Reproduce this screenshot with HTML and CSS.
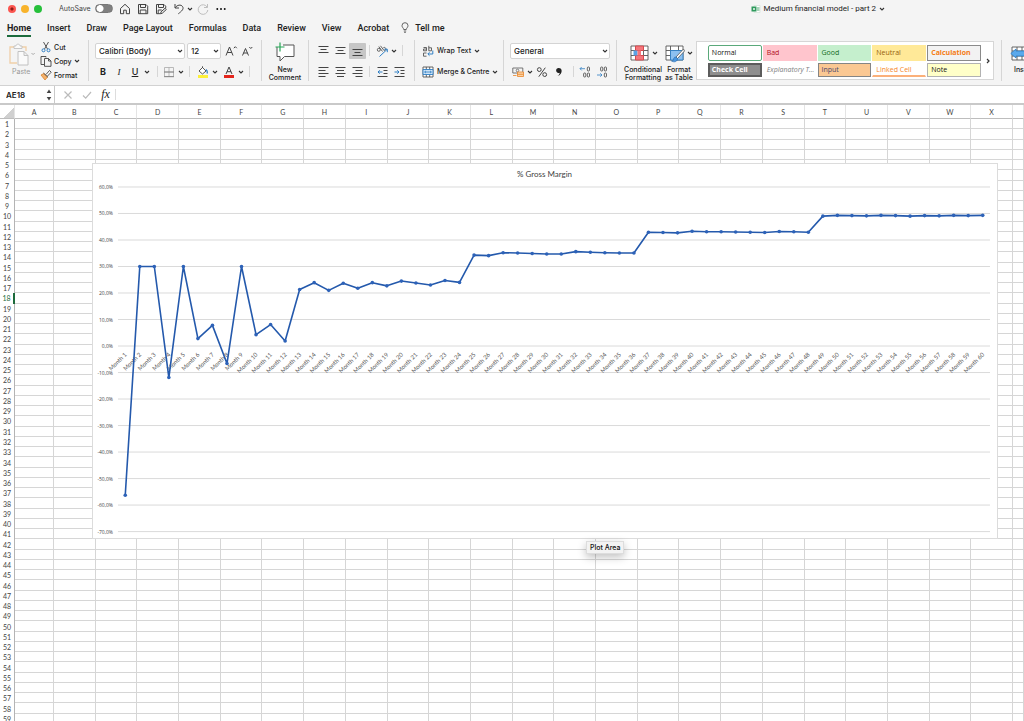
FILE: index.html
```
<!DOCTYPE html>
<html lang="en">

<head>
    <meta charset="UTF-8">
    <meta name="viewport" content="width=device-width, initial-scale=1.0">
    <title>Medium financial model - part 2</title>
    <link rel="stylesheet" href="styles.css">
</head>

<body>
<svg class="defs" aria-hidden="true">
    <symbol id="chev" viewBox="0 0 6 6"><path d="M1 2l2 2 2-2" fill="none" stroke="currentColor" stroke-width="1.1"/></symbol>
    <symbol id="table-grid" viewBox="0 0 20 18"><path d="M1 1h17v14H1zM1 5.5h17M1 10.5h17M5.5 1v14M13.500 1v14" fill="#fff" stroke="#555" stroke-width=".9"/></symbol>
</svg>

<!-- Title bar -->
<header class="titlebar">
    <div class="lights">
        <span class="light red"></span>
        <span class="light yellow"></span>
        <span class="light green"></span>
    </div>
    <label class="autosave" for="autosave">AutoSave</label>
    <input type="checkbox" id="autosave" class="toggle">
    <div class="quick">
        <button aria-label="Home"><svg width="12" height="12" viewBox="0 0 12 12"><path d="M1.500 5.500L6 1.300l4.500 4.200v5.200H7.300V7.200H4.700v3.500H1.500z"/></svg></button>
        <button aria-label="Save"><svg width="12" height="12" viewBox="0 0 12 12"><path d="M1.500 1.500h7.500l1.700 1.700v7.500H1.500zM3.500 1.500v3h5v-3M3.200 10.700V7h5.800v3.700"/></svg></button>
        <button aria-label="Save as"><svg width="12" height="12" viewBox="0 0 12 12"><path d="M5 10.700H1.500V1.500h7.500l1.700 1.700v2M3.500 1.500v3h5v-3M3.200 10.700V7h3.500"/><path d="M5.500 10.800l.6-2 4-3.600 1.200 1.300-4 3.700z" fill="#444"/></svg></button>
        <button class="undo" aria-label="Undo"><svg width="12" height="12" viewBox="0 0 12 12"><path d="M2 1v4h4M2.200 4.800C4 1.800 8 1.200 9.600 3.600c1.500 2.500-.8 4.400-4.300 7.200"/></svg></button>
        <button class="undo-more" aria-label="Undo history"><svg class="chev"><use href="#chev"/></svg></button>
        <button class="faded" aria-label="Redo"><svg width="12" height="12" viewBox="0 0 12 12"><path d="M10.500 1v3.500H7M10.200 4.200A4.800 4.800 0 1 0 10.800 7"/></svg></button>
        <button class="dots" aria-label="More"><svg width="12" height="12" viewBox="0 0 12 12"><path d="M1.500 6h1.600M5.200 6h1.600M8.900 6h1.600"/></svg></button>
    </div>
    <div class="doc-title">
        <svg width="10" height="8" viewBox="0 0 10 8"><path d="M3 .5h6v7H3z" fill="#fff" stroke="#c9ddd0" stroke-width=".6"/><path d="M6 3h2.500M6 5h2.500" stroke="#4faa74"/><path d="M.5 1.500h5v5h-5z" fill="#2f9a5d"/><path d="M2 3l2 2M4 3L2 5" stroke="#fff" stroke-width=".7"/></svg>
        <span>Medium financial model - part 2</span>
        <svg class="chev"><use href="#chev"/></svg>
    </div>
</header>

<!-- Tabs -->
<nav class="tabs">
    <a href="#home" class="active">Home</a>
    <a href="#insert">Insert</a>
    <a href="#draw">Draw</a>
    <a href="#layout">Page Layout</a>
    <a href="#formulas">Formulas</a>
    <a href="#data">Data</a>
    <a href="#review">Review</a>
    <a href="#view">View</a>
    <a href="#acrobat">Acrobat</a>
    <a href="#tellme" class="tell">
        <svg width="8" height="11" viewBox="0 0 8 11"><path d="M2.700 7.500C2.600 6 1 5.500 1 3.700a3 3 0 0 1 6 0C7 5.500 5.400 6 5.300 7.500zM2.800 9h2.400M3.200 10.400h1.600" fill="none" stroke="#555" stroke-width=".9"/></svg>
        Tell me
    </a>
</nav>

<!-- Ribbon -->
<div class="ribbon">
    <div class="group clipboard">
        <button class="paste">
            <svg width="28" height="24" viewBox="0 0 28 24"><path d="M9 20H2V4h16v4" fill="none" stroke="#f0cfa8" stroke-width="1.300"/><path d="M6 5.500V3h2c0-2.500 4-2.500 4 0h2v2.500z" fill="#fafafa" stroke="#bbb" stroke-width=".8"/><path d="M10 8.500h6l4 4V22H10zM16 8.500v4h4" fill="#fafafa" stroke="#bbb" stroke-width=".9"/><path d="M23.500 10l1.600 1.600L26.700 10" fill="none" stroke="#aaa"/></svg>
            <span>Paste</span>
        </button>
        <div class="clip-list">
            <button><svg width="12" height="12" viewBox="0 0 12 12"><path d="M3.500 1l4 7M8.500 1l-4 7" fill="none" stroke="#444" stroke-width=".9"/><circle cx="3.500" cy="9.300" r="1.500" fill="none" stroke="#2f7fc4"/><circle cx="8.500" cy="9.300" r="1.500" fill="none" stroke="#2f7fc4"/></svg>Cut</button>
            <button><svg width="12" height="12" viewBox="0 0 12 12"><path d="M4 9.500H1v-8h5v1M4.500 3.500h4l2.500 2.500v5.300H4.500zM8.500 3.500V6H11" fill="none" stroke="#444" stroke-width=".9"/></svg>Copy<svg class="chev"><use href="#chev"/></svg></button>
            <button><svg width="12" height="12" viewBox="0 0 12 12"><path d="M1 6l3-1.500 3.500 3.500L5 11z" fill="#f5b26b" stroke="#d9822b" stroke-width=".8"/><path d="M3.500 4l4.500 4.300M6 5.500l3.500-4 1.700 1.700L7.500 7" fill="#fff" stroke="#444" stroke-width=".9"/></svg>Format</button>
        </div>
    </div>

    <div class="group font">
        <div class="row">
            <select class="box font-name" aria-label="Font"><option>Calibri (Body)</option></select>
            <select class="box font-size" aria-label="Font size"><option>12</option></select>
            <button class="grow" aria-label="Increase font size"><svg width="13" height="12" viewBox="0 0 13 12"><path d="M1 10.500L4.500 2 8 10.500M2.200 7.500h4.600M8.800 3.200l1.500-1.500 1.500 1.500" fill="none" stroke="#444"/></svg></button>
            <button aria-label="Decrease font size"><svg width="13" height="12" viewBox="0 0 13 12"><path d="M1.500 10.500L4.500 3.500l3 7M2.500 8h4M8.300 2l1.500 1.500L11.300 2" fill="none" stroke="#444"/></svg></button>
        </div>
        <div class="row styles-row">
            <button class="letter bold">B</button>
            <button class="letter italic">I</button>
            <button class="letter underline">U</button>
            <button class="more" aria-label="Underline styles"><svg class="chev"><use href="#chev"/></svg></button>
            <span class="bar"></span>
            <button class="pick" aria-label="Borders"><svg width="12" height="12" viewBox="0 0 12 12"><path d="M1.500 1.500h9v9h-9zM6 1.500v9M1.500 6h9" fill="none" stroke="#aaa" stroke-width=".8"/><path d="M1 10.700h10M1 6h10" stroke="#777" stroke-width=".8"/></svg><svg class="chev"><use href="#chev"/></svg></button>
            <span class="bar"></span>
            <button class="pick fill" aria-label="Fill colour"><svg width="12" height="12" viewBox="0 0 12 12"><path d="M2 5L5.500 1.500 9 5 5.500 8zM5.500 2V.3" fill="#fff" stroke="#444" stroke-width=".9"/><path d="M9 3.500c1.500 1 1.500 2 1.300 4" fill="none" stroke="#2f7fc4" stroke-width="1.300"/><path d="M1 9h10v3H1z" fill="#fdf03a"/></svg><svg class="chev"><use href="#chev"/></svg></button>
            <button class="pick" aria-label="Font colour"><svg width="12" height="12" viewBox="0 0 12 12"><path d="M3 8L6 1l3 7M4 5.700h4" fill="none" stroke="#444"/><path d="M1 9h10v3H1z" fill="#e3261d"/></svg><svg class="chev"><use href="#chev"/></svg></button>
            <span class="bar"></span>
        </div>
    </div>

    <div class="group comment">
        <button class="big">
            <svg width="20" height="20" viewBox="0 0 20 20"><path d="M2 5v9.500h3V19l4.500-4.500H19V3H8" fill="#fff" stroke="#555"/><path d="M5 .5v9M.5 5h9" stroke="#27a556" stroke-width="1.200"/></svg>
            <span>New<br>Comment</span>
        </button>
    </div>

    <div class="group align">
        <div class="row">
            <button class="al" aria-label="Top align"><svg width="11" height="11" viewBox="0 0 11 11"><path d="M.5 1.500h10M2.500 4.500h6M.5 7.500h10"/></svg></button>
            <button class="al" aria-label="Middle align"><svg width="11" height="11" viewBox="0 0 11 11"><path d="M.5 2.500h10M2.500 5.500h6M.5 8.500h10"/></svg></button>
            <button class="al on" aria-label="Bottom align"><svg width="11" height="11" viewBox="0 0 11 11"><path d="M.5 4.500h10M2.500 7.500h6M.5 10.500h10"/></svg></button>
            <span class="bar"></span>
            <button class="pick" aria-label="Orientation"><svg width="12" height="12" viewBox="0 0 12 12"><circle cx="2.800" cy="4.800" r="1.500" fill="none" stroke="#555" stroke-width=".9"/><path d="M2.800 1.500l3.700 5M4.500 .8L8 5.500M7.300 2.800a1.500 1.500 0 1 1 .8 2.600" fill="none" stroke="#555" stroke-width=".9"/><path d="M3.500 11.500L11 4.500M8.300 4.200h3v3" fill="none" stroke="#2f7fc4"/></svg><svg class="chev"><use href="#chev"/></svg></button>
            <span class="bar"></span>
        </div>
        <div class="row">
            <button class="al" aria-label="Align left"><svg width="11" height="11" viewBox="0 0 11 11"><path d="M.5 1.500h10M.5 4.500h7M.5 7.500h10M.5 10.500h7"/></svg></button>
            <button class="al" aria-label="Centre"><svg width="11" height="11" viewBox="0 0 11 11"><path d="M.5 1.500h10M2 4.500h7M.5 7.500h10M2 10.500h7"/></svg></button>
            <button class="al" aria-label="Align right"><svg width="11" height="11" viewBox="0 0 11 11"><path d="M.5 1.500h10M3.500 4.500h7M.5 7.500h10M3.500 10.500h7"/></svg></button>
            <span class="bar"></span>
            <button class="al" aria-label="Decrease indent"><svg width="11" height="11" viewBox="0 0 11 11"><path d="M.5 1.500h10M6.500 4.500h4M6.500 7.500h4M.5 10.500h10"/><path d="M5.500 6H1M2.700 4.300L1 6l1.700 1.700" stroke="#2f7fc4"/></svg></button>
            <button class="al" aria-label="Increase indent"><svg width="11" height="11" viewBox="0 0 11 11"><path d="M.5 1.500h10M6.500 4.500h4M6.500 7.500h4M.5 10.500h10"/><path d="M.5 6H5M3.300 4.300L5 6 3.300 7.700" stroke="#2f7fc4"/></svg></button>
        </div>
    </div>

    <div class="group wrap">
        <div class="row">
            <button class="labelled"><svg width="12" height="12" viewBox="0 0 12 12"><path d="M1.500 2.500h3v3.300h-3V4h3M6.800 .8v5h2.700v-3H6.800M4.500 8h-3v3.200h3" fill="none" stroke="#555" stroke-width=".9"/><path d="M10.800 5.500V9H6M7.500 7.300L5.800 9l1.700 1.700" fill="none" stroke="#2f7fc4"/></svg>Wrap Text<svg class="chev"><use href="#chev"/></svg></button>
        </div>
        <div class="row">
            <button class="labelled"><svg width="12" height="12" viewBox="0 0 12 12"><path d="M1 1h10v10H1zM4.300 1v10M7.700 1v10" fill="#fff" stroke="#555" stroke-width=".9"/><path d="M1 3.500h10v5H1z" fill="#cfe4f7" stroke="#2f7fc4" stroke-width=".9"/><path d="M2.500 6h7M4 4.800L2.700 6 4 7.200M8 4.800L9.300 6 8 7.200" fill="none" stroke="#2f7fc4" stroke-width=".8"/></svg>Merge &amp; Centre<svg class="chev"><use href="#chev"/></svg></button>
        </div>
    </div>

    <div class="group number">
        <div class="row">
            <select class="box format" aria-label="Number format"><option>General</option></select>
        </div>
        <div class="row">
            <button class="pick" aria-label="Currency"><svg width="12" height="12" viewBox="0 0 12 12"><path d="M.8 2h10v5h-10z" fill="none" stroke="#666" stroke-width=".9"/><circle cx="5.500" cy="4.500" r="1.300" fill="none" stroke="#666" stroke-width=".8"/><path d="M5.500 6h6v4.500h-6zM5.500 8.300h6M1 9.500h3.500" fill="#fbd2a5" stroke="#e8872b" stroke-width=".8"/></svg><svg class="chev"><use href="#chev"/></svg></button>
            <button class="percent" aria-label="Percent"><svg width="12" height="12" viewBox="0 0 12 12"><circle cx="3.300" cy="3.600" r="1.900"/><circle cx="8.700" cy="8.600" r="1.900"/><path d="M9.300 1.700l-6.500 9"/></svg></button>
            <button class="comma" aria-label="Comma style"><svg width="8" height="12" viewBox="0 0 8 12"><path d="M3.800 2a2.500 2.500 0 1 0 1 4.700C4.500 8.300 3.700 9.200 2.300 10c3.200-.6 4.700-3.300 4.300-5.700C6.300 2.900 5.200 2 3.800 2z" fill="#222"/></svg></button>
            <span class="bar"></span>
            <button class="dec" aria-label="Increase decimal"><svg width="12" height="12" viewBox="0 0 12 12"><path d="M6 2.700H1M2.700 1L1 2.700l1.700 1.700" stroke="#2f7fc4"/><rect x="8.300" y="1" width="2.200" height="4" rx="1"/><rect x="4.600" y="7" width="2.200" height="4" rx="1"/><rect x="8.300" y="7" width="2.200" height="4" rx="1"/></svg></button>
            <button class="dec" aria-label="Decrease decimal"><svg width="12" height="12" viewBox="0 0 12 12"><path d="M1 9h5M4.300 7.300L6 9l-1.700 1.700" stroke="#2f7fc4"/><rect x="4.600" y="1" width="2.200" height="4" rx="1"/><rect x="8.300" y="1" width="2.200" height="4" rx="1"/><rect x="8.300" y="7" width="2.200" height="4" rx="1"/></svg></button>
        </div>
    </div>

    <div class="group tables">
        <button class="big">
            <span class="pic"><svg width="20" height="16" viewBox="0 0 20 16"><use href="#table-grid" width="20" height="18"/><path d="M5.500 1h8v4.500h-8zM5.500 10.500h8V15h-8z" fill="#f4777c" stroke="#d9454b" stroke-width=".9"/><path d="M3.500 5.500h4v5h-4z" fill="#5aa3e6"/><path d="M7.500 5.500h3.500v5H7.500z" fill="#f4777c"/></svg><svg class="chev"><use href="#chev"/></svg></span>
            <span>Conditional<br>Formatting</span>
        </button>
        <button class="big">
            <span class="pic"><svg width="20" height="16" viewBox="0 0 20 16" overflow="visible"><use href="#table-grid" width="20" height="18"/><path d="M5.500 5.500h12.500V15h-12.500z" fill="#8cc0f0" stroke="#2f7fc4" stroke-width=".9"/><path d="M18.500 4l-7.500 8 1.500 1.500L19.500 6z" fill="#fff" stroke="#555" stroke-width=".8"/><path d="M11 12c-2 0-2.500 1.500-2.500 2.500s-1 1.500-2 1.500c3 1.800 6 .5 6-2.500z" fill="#4a97e0" stroke="#2268ad" stroke-width=".6"/></svg><svg class="chev"><use href="#chev"/></svg></span>
            <span>Format<br>as Table</span>
        </button>
    </div>

    <div class="gallery">
        <div class="cells">
            <button class="cell normal">Normal</button>
            <button class="cell bad">Bad</button>
            <button class="cell good">Good</button>
            <button class="cell neutral">Neutral</button>
            <button class="cell calc">Calculation</button>
            <button class="cell check">Check Cell</button>
            <button class="cell explain">Explanatory T...</button>
            <button class="cell input">Input</button>
            <button class="cell linked">Linked Cell</button>
            <button class="cell note">Note</button>
        </div>
        <button class="next" aria-label="More styles"><svg width="4" height="6" viewBox="0 0 4 6"><path d="M1 1l2 2-2 2" fill="none" stroke="#333" stroke-width="1.200"/></svg></button>
    </div>

    <div class="group insert">
        <button class="big">
            <svg width="24" height="16" viewBox="0 0 24 16"><path d="M2 2h21v13H2zM2 6h21M2 11h21M7 2v13M12 2v13M18 2v13" fill="#fff" stroke="#555" stroke-width=".9"/><path d="M6 6h18v5H6v2L.8 8.500 6 4z" fill="#5aa9ec" stroke="#2f7fc4" stroke-width=".8"/></svg>
            <span>Insert</span>
        </button>
    </div>
</div>

<!-- Formula bar -->
<div class="formula">
    <input type="text" class="name-box" value="AE18" aria-label="Name box">
    <button class="step" aria-label="Pick a name"><svg width="6" height="12" viewBox="0 0 6 12"><path d="M3 .5L5.300 4H.7zM3 11.500L5.300 8H.7z" fill="#444"/></svg></button>
    <button class="fbtn" aria-label="Cancel"><svg width="10" height="10" viewBox="0 0 10 10"><path d="M1.500 1.500l7 7M8.500 1.500l-7 7" stroke="#bbb" stroke-width="1.200"/></svg></button>
    <button class="fbtn" aria-label="Enter"><svg width="10" height="10" viewBox="0 0 10 10"><path d="M1 5.500l2.700 2.700L9 2" fill="none" stroke="#bbb" stroke-width="1.200"/></svg></button>
    <button class="fbtn fx">fx</button>
    <input type="text" class="fx-input" aria-label="Formula">
</div>

<!-- Worksheet -->
<main class="sheet">
    <table class="grid">
        <thead><tr id="letters"></tr></thead>
        <tbody id="rows"></tbody>
    </table>
    <figure class="chart">
        <svg id="chart" viewBox="0 0 905 374" role="img" aria-label="% Gross Margin"></svg>
    </figure>
    <div class="tooltip">Plot Area</div>
</main>

<script src="script.js"></script>
</body>

</html>
```
FILE: styles.css
```
* {
    box-sizing: border-box;
    margin: 0;
    padding: 0;
}

body {
    font-family: Inter, "Liberation Sans", sans-serif;
    font-size: 8px;
    color: #222;
    background-color: #f4f4f4;
    display: flex;
    flex-direction: column;
    height: 100vh;
    overflow: hidden;
}

button, input, select {
    font: inherit;
    color: inherit;
    background: none;
    border: none;
    outline: none;
}

button {
    display: flex;
    align-items: center;
    white-space: nowrap;
}

svg {
    display: block;
    flex: none;
}

.defs {
    display: none;
}

.chev {
    width: 6px;
    height: 6px;
    color: #333;
}

/* Title bar */
.titlebar {
    display: flex;
    align-items: center;
    height: 17px;
    padding-left: 8px;
    flex: none;
}

.lights {
    display: flex;
    gap: 5px;
    width: 51px;
}

.light {
    width: 8px;
    height: 8px;
    border-radius: 50%;
}

.red {
    background: radial-gradient(#8e1b16 20%, #fb5650 35%);
}

.yellow {
    background-color: #f8b32b;
}

.green {
    background-color: #26c03b;
}

.autosave {
    width: 36px;
    color: #444;
    font-size: 7px;
}

.toggle {
    appearance: none;
    width: 18px;
    height: 9px;
    border-radius: 5px;
    border: 1px solid #777;
    background: radial-gradient(circle at 4px 50%, #fff 3px, #808080 4px);
}

.quick {
    display: flex;
    align-items: center;
    gap: 6px;
    margin-left: 6px;
}

.quick path {
    fill: none;
    stroke: #444;
    stroke-width: 1;
}

.quick .undo-more {
    margin: 0 -2px 0 -4px;
}

.quick .faded {
    opacity: 0.3;
}

.quick .dots path {
    stroke: #222;
    stroke-width: 2;
}

.doc-title {
    display: flex;
    align-items: center;
    gap: 3px;
    margin-left: auto;
    margin-right: 139px;
    font-family: Roboto, sans-serif;
}

/* Tabs */
.tabs {
    display: flex;
    gap: 16px;
    height: 21px;
    padding: 3px 7px 0;
    flex: none;
}

.tabs a {
    display: flex;
    align-items: center;
    height: 17px;
    color: #222;
    font-family: Roboto, sans-serif;
    font-size: 9px;
    font-weight: 500;
    text-decoration: none;
    border-bottom: 2px solid transparent;
}

.tabs .active {
    font-weight: 700;
    border-color: #1c6b3c;
}

.tabs .tell {
    gap: 6px;
    margin-left: -4px;
}

/* Ribbon */
.ribbon {
    display: flex;
    align-items: flex-start;
    height: 48px;
    padding-top: 2px;
    border-bottom: 1px solid #d2d2d2;
    flex: none;
    overflow: hidden;
    font-weight: 500;
}

.group {
    display: flex;
    flex-direction: column;
    flex: none;
    height: 41px;
    border-right: 1px solid #d6d6d6;
}

.row {
    display: flex;
    align-items: center;
    height: 21px;
    flex: none;
}

.bar {
    width: 1px;
    height: 11px;
    background-color: #d6d6d6;
}

.box {
    appearance: none;
    height: 16px;
    padding-left: 3px;
    border: 1px solid #d4d4d4;
    border-radius: 2px;
    background: #fff url("data:image/svg+xml,%3Csvg xmlns='http://www.w3.org/2000/svg' width='6' height='6' viewBox='0 0 6 6'%3E%3Cpath d='M1 2l2 2 2-2' fill='none' stroke='%23333' stroke-width='1.1'/%3E%3C/svg%3E") no-repeat right 1px center;
}

.clipboard {
    flex-direction: row;
    width: 89px;
    padding-left: 8px;
}

.paste {
    flex-direction: column;
    align-items: flex-start;
    width: 32px;
    padding-top: 3px;
    color: #999;
    font-size: 7px;
    font-weight: 400;
}

.paste span {
    padding-left: 4px;
}

.clip-list button {
    gap: 2px;
    height: 14px;
    font-size: 7px;
}

.font {
    width: 173px;
    padding-left: 6px;
}

.font-name {
    width: 90px;
    margin-right: 2px;
}

.font-size {
    width: 34px;
    margin-right: 4px;
}

.grow {
    margin-right: 3px;
}

.letter {
    justify-content: center;
    width: 16px;
    height: 16px;
    font-size: 9px;
}

.bold {
    font-weight: 700;
}

.italic {
    font-family: "Liberation Serif", serif;
    font-style: italic;
}

.underline {
    text-decoration: underline;
}

.more {
    margin: 0 7px 0 1px;
}

.pick {
    gap: 3px;
    padding: 0 2px;
}

.styles-row .pick {
    padding: 0 2px 0 5px;
}

.styles-row .fill {
    padding: 0 0 0 7px;
}

.styles-row .bar {
    margin-left: 3px;
}

.styles-row .more + .bar {
    margin-left: 0;
}

.comment {
    width: 47px;
    align-items: center;
}

.big {
    flex-direction: column;
    gap: 4px;
    padding-top: 3px;
    font-size: 7px;
    line-height: 8px;
    text-align: center;
}

.comment .big {
    padding-top: 2px;
}

.align {
    width: 106px;
    padding-left: 6px;
}

.al {
    justify-content: center;
    width: 17px;
    height: 16px;
}

.al path {
    fill: none;
    stroke: #444;
}

.al path[stroke] {
    stroke: #2f7fc4;
}

.al.on {
    background-color: #c6c6c6;
    border-radius: 1px;
}

.align .bar {
    margin: 0 4px 0 3px;
}

.wrap {
    width: 89px;
    padding-left: 7px;
}

.labelled {
    gap: 3px;
    font-size: 7px;
}

.number {
    width: 113px;
    padding-left: 6px;
}

.format {
    width: 100px;
}

.percent svg, .dec svg {
    fill: none;
    stroke: #444;
    stroke-width: 1;
}

.dec svg {
    stroke-width: 0.8;
}

.percent {
    margin: 0 7px 0 1px;
}

.comma {
    margin-right: 10px;
}

.dec {
    margin-left: 5px;
}

.tables {
    flex-direction: row;
    gap: 2px;
    padding: 0 0 0 7px;
    border: none;
}

.pic {
    display: flex;
    align-items: center;
    gap: 2px;
}

.big .pic + span {
    padding-right: 1px;
}

.tables .big, .insert .big {
    gap: 5px;
    padding-top: 5px;
}

/* Cell style gallery */
.gallery {
    display: flex;
    align-items: center;
    flex: 1;
    height: 39px;
    margin: 1px 7px 0 2px;
    padding-left: 11px;
    background-color: #fff;
    border: 1px solid #d6d6d6;
    font-family: "Open Sans", sans-serif;
    font-size: 7px;
}

.cells {
    display: grid;
    grid-template-columns: repeat(5, 1fr);
    grid-template-rows: 16px 14px;
    gap: 2px 1px;
    flex: 1;
}

.cell {
    padding-left: 3px;
    border: 1px solid transparent;
    overflow: hidden;
}

.normal {
    border-color: #5aa97a;
    border-radius: 2px;
    color: #111;
}

.bad {
    background-color: #ffc5cd;
    color: #b01020;
}

.good {
    background-color: #c5efcd;
    color: #126b1c;
}

.neutral {
    background-color: #ffe998;
    color: #96600a;
}

.calc {
    background-color: #f2f2f2;
    border-color: #8a8a8a;
    color: #f57c14;
    font-weight: 700;
}

.check {
    padding-left: 2px;
    background-color: #8e8e8e;
    border: 2px solid #5c5c5c;
    color: #fff;
    font-weight: 700;
}

.explain {
    color: #808080;
    font-style: italic;
}

.input {
    background-color: #fbc893;
    border-color: #858585;
    color: #47476e;
}

.linked {
    border-bottom: 2px solid #fbb07a;
    color: #f5872b;
}

.note {
    background-color: #ffffc8;
    border-color: #b2b2b2;
    color: #111;
}

.next {
    padding: 4px 3px 4px 5px;
}

.insert {
    width: 23px;
    padding-left: 8px;
    border-right: none;
    border-left: 1px solid #d6d6d6;
}

.insert .big {
    align-items: flex-start;
}

.insert span {
    padding-left: 4px;
}

/* Formula bar */
.formula {
    display: flex;
    align-items: center;
    height: 19px;
    background-color: #fff;
    border-bottom: 2px solid #c9c9c9;
    flex: none;
}

.name-box {
    width: 45px;
    padding-left: 6px;
    font-weight: 600;
}

.step {
    height: 17px;
    padding: 0 2px 0 1px;
    border-right: 1px solid #c9c9c9;
}

.fbtn {
    justify-content: center;
    width: 19px;
}

.step + .fbtn {
    margin-left: 3px;
}

.fx {
    font-family: "Liberation Serif", serif;
    font-size: 12px;
    font-style: italic;
}

.fx-input {
    flex: 1;
    height: 11px;
    border-left: 1px solid #ddd;
}

/* Worksheet */
.sheet {
    position: relative;
    flex: 1;
    min-height: 0;
    background-color: #fff;
    overflow: hidden;
    font-family: Lato, "Open Sans", sans-serif;
}

/* 59 rows, the last one runs past the window edge */
.grid {
    display: grid;
    grid-template-columns: 15px 39px repeat(23, 1fr) 11px;
    grid-template-rows: 14px repeat(59, 1fr);
    height: calc(100% + 3px);
}

.grid thead, .grid tbody, .grid tr {
    display: contents;
}

.grid th, .grid td {
    display: flex;
    align-items: center;
    justify-content: center;
    min-width: 0;
    min-height: 0;
    border-right: 1px solid #d6d6d6;
    border-bottom: 1px solid #d6d6d6;
    overflow: hidden;
}

.grid th {
    color: #444;
    font-size: 7px;
    font-weight: 400;
    line-height: 8px;
}

.grid thead th {
    border-right-color: #e4e4e4;
    border-bottom-color: #bdbdbd;
}

.grid tbody th {
    border-right-color: #b4b4b4;
    border-bottom: none;
}

.grid .corner {
    background: linear-gradient(135deg, transparent 60%, #d0d0d0 60%);
}

.grid .current {
    color: #1c6b3c;
    border-right: 2px solid #1c6b3c;
}

.chart {
    position: absolute;
    top: 58px;
    left: 92px;
    right: 26px;
    background-color: #fff;
    border: 1px solid #dcdcdc;
}

.chart svg {
    width: 100%;
}

.gridline {
    stroke: #dadada;
}

.line {
    fill: none;
    stroke: #2459ac;
    stroke-width: 1.6;
    stroke-linejoin: round;
}

.dot {
    fill: #2d62b8;
}

.axis {
    fill: #444;
    font-family: "Open Sans", sans-serif;
    font-size: 5px;
    text-anchor: end;
}

.month {
    fill: #555;
    font-size: 6px;
    text-anchor: end;
}

.chart-title {
    fill: #444;
    font-size: 8px;
    text-anchor: middle;
}

.tooltip {
    position: absolute;
    top: 436px;
    left: 586px;
    padding: 1px 3px;
    background-color: #f3f3f3;
    border: 1px solid #ddd;
    box-shadow: 0 3px 8px rgba(0, 0, 0, 0.25);
    color: #111;
    font-family: Inter, sans-serif;
    font-size: 7px;
    font-weight: 500;
}
```
FILE: script.js
```
const ROWS = 59;
const CURRENT_ROW = 18;
const LETTERS = 'ABCDEFGHIJKLMNOPQRSTUVWXY'.split('');

// Gross margin per month, in percent
const margins = [
	-56.3, 30, 30, -11.9, 30, 2.8, 7.8, -6.6, 30, 4.3, 8.1, 1.9,
	21.3, 23.9, 21, 23.7, 21.8, 23.9, 22.7, 24.5, 23.8, 23, 24.7, 24,
	34.3, 34.1, 35.2, 35.1, 34.9, 34.7, 34.7, 35.6, 35.4, 35.2, 35.1, 35.1,
	42.9, 42.8, 42.7, 43.3, 43.1, 43.1, 43, 42.9, 42.8, 43.2, 43.1, 42.9,
	49, 49.3, 49.2, 49.1, 49.3, 49.2, 49, 49.2, 49.1, 49.3, 49.2, 49.3
];

function drawSheet() {
	document.getElementById('letters').innerHTML =
		'<th class="corner"></th>' + LETTERS.map((l, i) => `<th>${i < 24 ? l : ''}</th>`).join('');

	let html = '';
	for (let r = 1; r <= ROWS; r++) {
		html += `<tr><th class="${r === CURRENT_ROW ? 'current' : ''}">${r}</th>${'<td></td>'.repeat(LETTERS.length)}</tr>`;
	}
	document.getElementById('rows').innerHTML = html;
}

function drawChart() {
	const left = 25, right = 898, top = 23, bottom = 368;
	const step = (right - left) / margins.length;
	const y = v => top + (60 - v) * (bottom - top) / 130;
	const x = i => left + step * (i + 0.5);

	let svg = '<text class="chart-title" x="452" y="13">% Gross Margin</text>';
	for (let v = 60; v >= -70; v -= 10) {
		svg += `<line class="gridline" x1="${left}" x2="${right}" y1="${y(v)}" y2="${y(v)}"/>`;
		svg += `<text class="axis" x="${left - 5}" y="${y(v) + 2}">${v},0%</text>`;
	}
	margins.forEach((m, i) => {
		svg += `<text class="month" transform="translate(${x(i) + 2} ${y(0) + 9}) rotate(-45)">Month ${i + 1}</text>`;
	});
	svg += `<polyline class="line" points="${margins.map((m, i) => `${x(i)},${y(m)}`).join(' ')}"/>`;
	margins.forEach((m, i) => {
		svg += `<circle class="dot" cx="${x(i)}" cy="${y(m)}" r="1.8"/>`;
	});
	document.getElementById('chart').innerHTML = svg;
}

drawSheet();
drawChart();
```
